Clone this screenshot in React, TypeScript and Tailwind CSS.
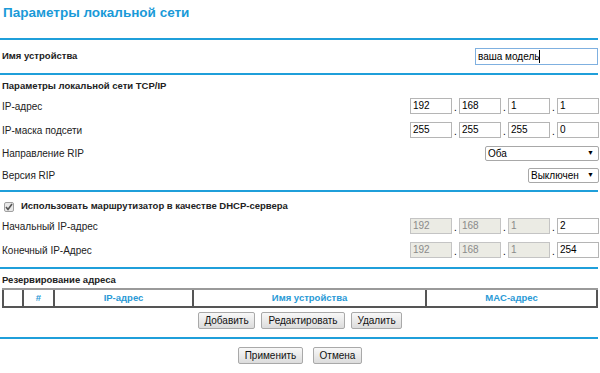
import React from "react";

const font = { fontFamily: '"Liberation Sans", Arial, sans-serif' };

function Line() {
  return <div className="h-[2px] bg-[#1f9fda] w-[598px]" />;
}

function IpInput({ v, disabled }: { v: string; disabled?: boolean }) {
  return (
    <div
      className={
        "w-[42px] h-[16px] border pl-[2px] text-[10px] leading-[14px] " +
        (disabled ? "bg-[#ebebe4] text-[#8a8a8a] border-[#c4c4c4]" : "bg-white text-black border-[#b5b5b5]")
      }
    >
      {v}
    </div>
  );
}

function Dot() {
  return <div className="w-[7px] text-[10px] leading-[14px] flex justify-center pt-[3px]">.</div>;
}

function IpGroup({ vals, dis }: { vals: string[]; dis?: boolean[] }) {
  return (
    <div className="flex items-start">
      <IpInput v={vals[0]} disabled={dis?.[0]} />
      <Dot />
      <IpInput v={vals[1]} disabled={dis?.[1]} />
      <Dot />
      <IpInput v={vals[2]} disabled={dis?.[2]} />
      <Dot />
      <IpInput v={vals[3]} disabled={dis?.[3]} />
    </div>
  );
}

function Row({ label, h, children }: { label: string; h: string; children?: React.ReactNode }) {
  return (
    <div className={"flex items-center justify-between " + h}>
      <div className="text-[10px] text-[#222]">{label}</div>
      {children}
    </div>
  );
}

function Select({ text, w }: { text: string; w: string }) {
  return (
    <div
      className={
        "h-[15px] border border-[#a8a8a8] rounded-[2px] bg-white flex items-center justify-between pl-[2px] pr-[4px] text-[10px] " + w
      }
    >
      <span>{text}</span>
      <span className="text-[7px]">▼</span>
    </div>
  );
}

function Btn({ t, w }: { t: string; w: string }) {
  return (
    <div
      className={
        "h-[17px] border border-[#a9a9a9] rounded-[2px] bg-gradient-to-b from-[#f8f8f8] to-[#dcdcdc] text-[10px] text-[#111] flex items-center justify-center " +
        w
      }
    >
      {t}
    </div>
  );
}

export default function App() {
  return (
    <div className="w-[600px] h-[373px] bg-white text-black overflow-hidden" style={font}>
      <div className="h-[38px] pl-[3px] pt-[3px]">
        <div className="text-[13.5px] font-bold text-[#1a9ad8]">Параметры локальной сети</div>
      </div>
      <Line />
      <div className="h-[33px] flex items-center justify-between pl-[2px] pr-[2px]">
        <div className="text-[9.5px] font-bold text-[#222]">Имя устройства</div>
        <div className="w-[123px] h-[17px] border border-[#7fb0e0] text-[10px] leading-[15px] pl-[2px] flex items-center">
          ваша модель<span className="w-px h-[13px] bg-black" />
        </div>
      </div>
      <Line />
      <div className="pl-[2px] pr-[1px]">
        <div className="h-[19px] flex items-end pb-[1px] text-[9.5px] font-bold text-[#222]">
          Параметры локальной сети TCP/IP
        </div>
        <Row label="IP-адрес" h="h-[24px]">
          <IpGroup vals={["192", "168", "1", "1"]} />
        </Row>
        <Row label="IP-маска подсети" h="h-[24px]">
          <IpGroup vals={["255", "255", "255", "0"]} />
        </Row>
        <Row label="Направление RIP" h="h-[22px]">
          <Select text="Оба" w="w-[114px]" />
        </Row>
        <Row label="Версия RIP" h="h-[22px]">
          <Select text="Выключен" w="w-[71px]" />
        </Row>
        <div className="h-[4px]" />
      </div>
      <Line />
      <div className="pl-[2px] pr-[1px]">
        <div className="h-[22px] flex items-end gap-[7px] pl-[2px] pb-[1px]">
          <div className="w-[10px] h-[10px] mb-[1px] border border-[#a0a0a0] bg-[#e8e8e8] rounded-[2px] flex items-center justify-center">
            <svg width="8" height="8" viewBox="0 0 8 8">
              <path d="M1 4 L3 6.5 L7 1" stroke="#555" strokeWidth="1.6" fill="none" />
            </svg>
          </div>
          <div className="text-[9.5px] font-bold text-[#222]">Использовать маршрутизатор в качестве DHCP-сервера</div>
        </div>
        <Row label="Начальный IP-адрес" h="h-[24px]">
          <IpGroup vals={["192", "168", "1", "2"]} dis={[true, true, true, false]} />
        </Row>
        <Row label="Конечный IP-Адрес" h="h-[24px]">
          <IpGroup vals={["192", "168", "1", "254"]} dis={[true, true, true, false]} />
        </Row>
        <div className="h-[5px]" />
      </div>
      <Line />
      <div className="pl-[2px]">
        <div className="h-[19px] flex items-end pb-[1px] text-[9.5px] font-bold text-[#222]">Резервирование адреса</div>
        <div className="w-[596px] h-[20px] border-t-2 border-[#9a9a9a]">
          <div className="flex h-[18px] border-l-2 border-r-2 border-b-2 border-[#555] text-[9.5px] font-bold text-[#2a9ad6]">
            <div className="w-[20px] border-r-2 border-[#555]" />
            <div className="w-[31px] border-r-2 border-[#555] flex items-center justify-center">#</div>
            <div className="w-[139px] border-r-2 border-[#555] flex items-center justify-center">IP-адрес</div>
            <div className="w-[233px] border-r-2 border-[#555] flex items-center justify-center">Имя устройства</div>
            <div className="flex-1 flex items-center justify-center">MAC-адрес</div>
          </div>
        </div>
        <div className="h-[24px] flex items-center justify-center gap-[6px] pr-[2px]">
          <Btn t="Добавить" w="w-[57px]" />
          <Btn t="Редактировать" w="w-[84px]" />
          <Btn t="Удалить" w="w-[51px]" />
        </div>
      </div>
      <div className="h-[5px]" />
      <Line />
      <div className="h-[32px] flex items-center justify-center gap-[10px]">
        <Btn t="Применить" w="w-[65px]" />
        <Btn t="Отмена" w="w-[49px]" />
      </div>
    </div>
  );
}
